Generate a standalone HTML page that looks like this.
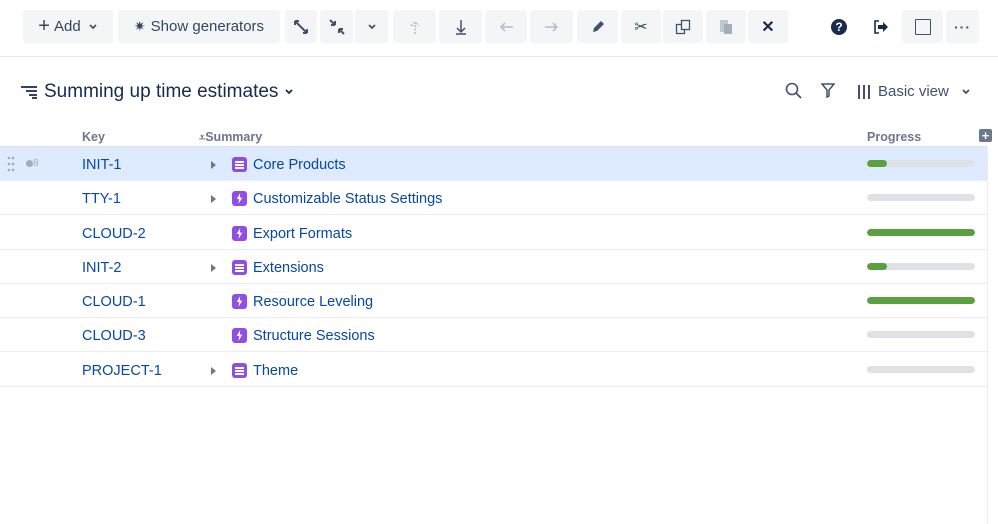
<!DOCTYPE html><html><head><style>
*{box-sizing:border-box;margin:0;padding:0}
body{width:998px;height:524px;background:#fff;font-family:"Liberation Sans",sans-serif;position:relative;overflow:hidden;color:#172b4d}
.b{position:absolute;top:10px;height:33px;background:#f4f5f7;border-radius:3px;display:flex;align-items:center;justify-content:center;font-size:15px;color:#344563}
.b svg{display:block}
.hr{position:absolute;left:0;right:0;top:56px;height:1px;background:#e4e6ea}
.title{position:absolute;left:20px;top:81px;font-size:19px;color:#172b4d;display:flex;align-items:center}
.th{position:absolute;top:130px;font-size:12.5px;font-weight:bold;color:#6b778c}
.row{position:absolute;left:0;width:987px;height:34px;border-bottom:1px solid #ebecf0}
.k{position:absolute;left:82px;top:10px;font-size:14.5px;color:#0747a6}
.s{position:absolute;left:253px;top:10px;font-size:14.5px;color:#0747a6}
.ic{position:absolute;left:232px;top:10px;width:15px;height:15px;border-radius:3px;background:#904ee2}
.ic.e::after{content:"";position:absolute;left:3px;top:4px;width:9px;height:1.5px;background:#fff;box-shadow:0 3px 0 #fff,0 6px 0 #fff}
.ic.s2::after{content:"";position:absolute;left:4px;top:2px;width:7px;height:11px;background:#fff;clip-path:polygon(60% 0,10% 55%,45% 55%,35% 100%,90% 42%,55% 42%)}
.tri{position:absolute;left:211px;top:14px;width:0;height:0;border-left:5px solid #6b778c;border-top:4px solid transparent;border-bottom:4px solid transparent}
.bar{position:absolute;left:867px;top:13px;width:108px;height:7px;border-radius:4px;background:#dfe1e6;overflow:hidden}
.bar i{display:block;height:100%;background:#5aa03f;border-radius:4px}
</style></head><body>
<div class="b" style="left:23px;width:90px"><span style="font-size:20px;margin-right:4px">+</span>Add<svg width="10" height="8" style="margin-left:7px"><path d="M2 2l3 3 3-3" stroke="#42526e" stroke-width="1.8" fill="none"/></svg></div>
<div class="b" style="left:118px;width:162px"><span style="margin-right:5px;font-size:14px">✷</span>Show generators</div>
<div class="b" style="left:285px;width:32px"><svg width="16" height="16"><path d="M2 2l12 12M2 2h4M2 2v4M14 14h-4M14 14v-4" stroke="#42526e" stroke-width="2" fill="none"/></svg></div>
<div class="b" style="left:320px;width:33px"><svg width="16" height="16"><path d="M1 1l5 5M15 15l-5-5M6 6h-4M6 6v-4M10 10h4M10 10v4" stroke="#42526e" stroke-width="2" fill="none"/></svg></div>
<div class="b" style="left:355px;width:33px"><svg width="10" height="8"><path d="M2 2l3 3 3-3" stroke="#42526e" stroke-width="1.8" fill="none"/></svg></div>
<div class="b" style="left:393px;width:43px"><svg width="14" height="16"><path d="M7 15V3M3 7l4-4 4 4" stroke="#b3bac5" stroke-width="1.5" stroke-dasharray="2 1.5" fill="none"/></svg></div>
<div class="b" style="left:439px;width:43px"><svg width="14" height="16"><path d="M7 1v12M3 9l4 4 4-4M2 15h10" stroke="#42526e" stroke-width="1.5" fill="none"/></svg></div>
<div class="b" style="left:485px;width:42px"><svg width="16" height="14"><path d="M15 7H3M7 3L3 7l4 4" stroke="#b3bac5" stroke-width="1.5" fill="none"/></svg></div>
<div class="b" style="left:530px;width:43px"><svg width="16" height="14"><path d="M1 7h12M9 3l4 4-4 4" stroke="#b3bac5" stroke-width="1.5" fill="none"/></svg></div>
<div class="b" style="left:577px;width:41px"><svg width="14" height="14"><path d="M2 12l1-4 7-7 3 3-7 7z" fill="#42526e"/></svg></div>
<div class="b" style="left:621px;width:40px"><span style="font-size:16px">✂</span></div>
<div class="b" style="left:663px;width:40px"><svg width="16" height="16"><rect x="1.5" y="5.5" width="8" height="9" fill="none" stroke="#42526e" stroke-width="1.3"/><rect x="6.5" y="1.5" width="8" height="9" fill="#f4f5f7" stroke="#42526e" stroke-width="1.3"/></svg></div>
<div class="b" style="left:706px;width:40px"><svg width="16" height="16"><rect x="2" y="1" width="8" height="12" fill="#c1c7d0"/><rect x="6" y="5" width="8" height="10" fill="#a5adba"/></svg></div>
<div class="b" style="left:748px;width:40px;font-weight:bold;font-size:16px;color:#172b4d">✕</div>
<div style="position:absolute;left:831px;top:19px;width:16px;height:16px;border-radius:50%;background:#172b4d;color:#fff;font-size:12px;font-weight:bold;text-align:center;line-height:16px">?</div>
<svg style="position:absolute;left:873px;top:20px" width="16" height="14"><path d="M6 1H2v12h4" stroke="#172b4d" stroke-width="1.6" fill="none"/><path d="M5 5h5V2l5 5-5 5V9H5z" fill="#172b4d"/></svg>
<div class="b" style="left:902px;width:41px"><div style="width:16px;height:16px;border:1.5px solid #42526e;border-radius:1px"></div></div>
<div class="b" style="left:946px;width:33px;font-weight:bold;color:#42526e;font-size:14px;letter-spacing:1px">···</div>
<div class="hr"></div>
<div class="title"><svg width="18" height="14" style="margin-right:6px"><path d="M1 2h16M6 6h11M9 10h8M12 13h5" stroke="#172b4d" stroke-width="1.8"/></svg>Summing up time estimates<svg width="10" height="8" style="margin-left:6px"><path d="M2 2l3 3 3-3" stroke="#172b4d" stroke-width="1.8" fill="none"/></svg></div>
<svg style="position:absolute;left:785px;top:82px" width="18" height="18"><circle cx="7" cy="7" r="5.5" stroke="#42526e" stroke-width="1.6" fill="none"/><path d="M11 11l5 5" stroke="#42526e" stroke-width="1.8"/></svg>
<svg style="position:absolute;left:821px;top:83px" width="14" height="15"><path d="M1 1h12L8 7v6l-2 1V7z" stroke="#42526e" stroke-width="1.5" fill="none"/></svg>
<div style="position:absolute;left:857px;top:83px;font-size:15px;color:#42526e;display:flex;align-items:center"><svg width="14" height="15" style="margin-right:7px"><path d="M2 1v14M7 1v14M12 1v14" stroke="#42526e" stroke-width="2"/></svg>Basic view<svg width="10" height="8" style="margin-left:12px"><path d="M2 2l3 3 3-3" stroke="#42526e" stroke-width="1.8" fill="none"/></svg></div>
<div class="th" style="left:82px">Key</div>
<div class="th" style="left:199px"><span style="font-size:11px">⩡</span>Summary</div>
<div class="th" style="left:867px">Progress</div>
<div style="position:absolute;left:979px;top:129px;width:13px;height:13px;border-radius:2px;background:#6b778c;color:#fff;font-size:13px;font-weight:bold;line-height:13px;text-align:center">+</div>
<div style="position:absolute;left:987px;top:147px;width:1px;height:377px;background:#ebecf0"></div>
<div style="position:absolute;left:0;top:146px;width:987px;height:1px;background:#dfe1e6"></div>

<div class="row" style="top:147px;background:#deebff"><div style="position:absolute;left:7px;top:8px;width:8px;height:18px;background-image:radial-gradient(circle,#a5adba 1.2px,transparent 1.5px);background-size:4px 6px"></div><div style="position:absolute;left:26px;top:13px;width:7px;height:7px;border-radius:50%;background:#a5adba"></div><div style="position:absolute;left:33px;top:11px;font-size:10px;color:#a5adba">8</div><div class="k">INIT-1</div><div class="tri"></div><div class="ic e"></div><div class="s">Core Products</div><div class="bar"><i style="width:20px"></i></div></div>
<div class="row" style="top:181px"><div class="k">TTY-1</div><div class="tri"></div><div class="ic s2"></div><div class="s">Customizable Status Settings</div><div class="bar"></div></div>
<div class="row" style="top:216px"><div class="k">CLOUD-2</div><div class="ic s2"></div><div class="s">Export Formats</div><div class="bar"><i style="width:108px"></i></div></div>
<div class="row" style="top:250px"><div class="k">INIT-2</div><div class="tri"></div><div class="ic e"></div><div class="s">Extensions</div><div class="bar"><i style="width:20px"></i></div></div>
<div class="row" style="top:284px"><div class="k">CLOUD-1</div><div class="ic s2"></div><div class="s">Resource Leveling</div><div class="bar"><i style="width:108px"></i></div></div>
<div class="row" style="top:318px"><div class="k">CLOUD-3</div><div class="ic s2"></div><div class="s">Structure Sessions</div><div class="bar"></div></div>
<div class="row" style="top:353px"><div class="k">PROJECT-1</div><div class="tri"></div><div class="ic e"></div><div class="s">Theme</div><div class="bar"></div></div>
</body></html>
